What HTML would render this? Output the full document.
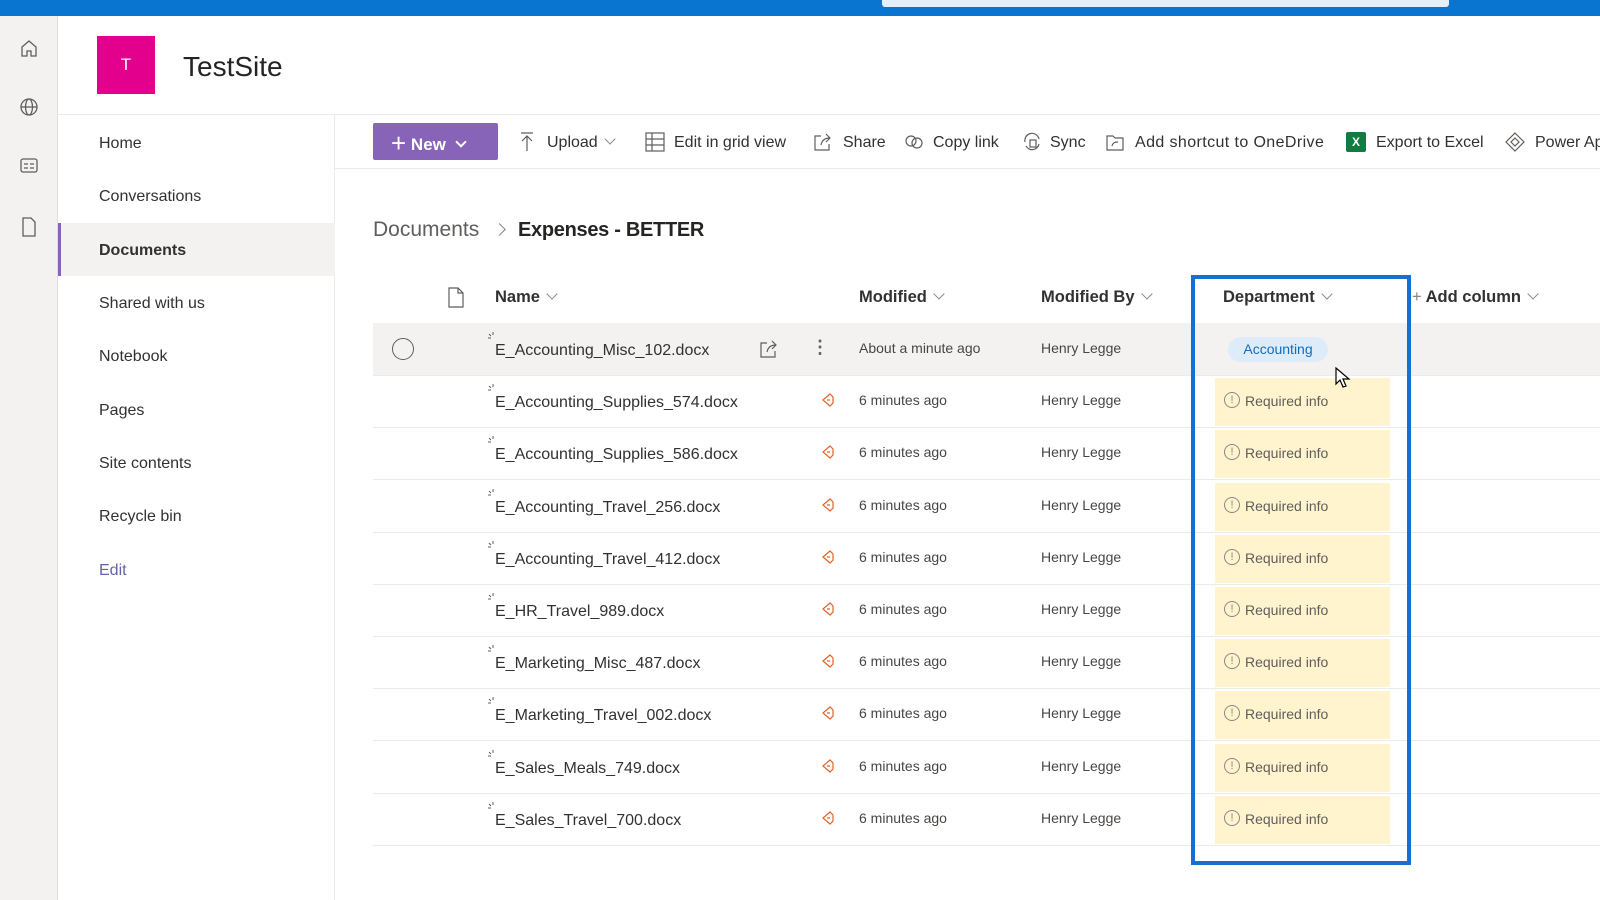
<!DOCTYPE html>
<html><head><meta charset="utf-8"><style>
*{box-sizing:border-box;margin:0;padding:0}
body{width:1600px;height:900px;overflow:hidden;background:#fff;font-family:"Liberation Sans",sans-serif;color:#323130;position:relative}
.a{position:absolute;white-space:nowrap}
.nav{font-size:16px;color:#323130}
.cmd{font-size:16px;color:#323130;top:134px}
.hdr{font-size:16.5px;color:#323130;top:288px;font-weight:600}
.fn{font-size:16px;color:#323130}
.mod{font-size:14px;color:#484644}
.req{position:absolute;left:1215px;width:175px;background:#fff4ce;color:#605e5c;font-size:14px}
.chev{display:inline-block;width:8px;height:8px;border-right:1.3px solid #8a8886;border-bottom:1.3px solid #8a8886;transform:rotate(45deg);margin-left:8px;position:relative;top:-4px}
</style></head><body>
<div class="a" style="left:0;top:0;width:1600px;height:16px;background:#0a74d1"></div>
<div class="a" style="left:882px;top:0;width:567px;height:7px;background:#e8eef5;border-radius:0 0 3px 3px"></div>
<div class="a" style="left:0;top:16px;width:58px;height:884px;background:#f3f2f1;border-right:1px solid #e1dfdd"></div>
<svg class="a" style="left:19px;top:38px" width="20" height="210" fill="none" stroke="#605e5c" stroke-width="1.3">
<path d="M3 9 L10 3 L17 9 V18 H12 V13 H8 V18 H3 Z"/>
<circle cx="10" cy="69" r="8"/><ellipse cx="10" cy="69" rx="3.5" ry="8"/><path d="M2 69H18"/>
<rect x="2" y="121" width="16" height="13" rx="2"/><path d="M5 126H9M5 130H9M11 126H15M11 130H15"/>
<path d="M4 180H12L16 184V198H4Z"/>
</svg>
<div class="a" style="left:58px;top:114px;width:1542px;height:1px;background:#edebe9"></div>
<div class="a" style="left:97px;top:36px;width:58px;height:58px;background:#e3008c;color:#fff;font-size:17px;text-align:center;line-height:58px">T</div>
<div class="a" style="left:183px;top:51px;font-size:28px;color:#252423">TestSite</div>
<div class="a" style="left:58px;top:115px;width:277px;height:785px;background:#fff;border-right:1px solid #edebe9"></div>
<div class="a" style="left:58px;top:223px;width:277px;height:53px;background:#f3f2f1;border-left:3px solid #8764b8"></div>
<div class="a nav" style="left:99px;top:135px">Home</div>
<div class="a nav" style="left:99px;top:188px">Conversations</div>
<div class="a nav" style="left:99px;top:242px;font-weight:600">Documents</div>
<div class="a nav" style="left:99px;top:295px">Shared with us</div>
<div class="a nav" style="left:99px;top:348px">Notebook</div>
<div class="a nav" style="left:99px;top:402px">Pages</div>
<div class="a nav" style="left:99px;top:455px">Site contents</div>
<div class="a nav" style="left:99px;top:508px">Recycle bin</div>
<div class="a nav" style="left:99px;top:562px;color:#6264a7">Edit</div>
<div class="a" style="left:335px;top:168px;width:1265px;height:1px;background:#edebe9"></div>
<div class="a" style="left:373px;top:123px;width:125px;height:37px;background:#8764b8;border-radius:2px;color:#fff;font-size:17px;font-weight:600;line-height:37px;padding-left:18px"><span style="font-size:26px;font-weight:400;position:relative;top:2px">+</span> New <span class="chev" style="border-color:#fff;border-width:2px;margin-left:6px"></span></div>
<svg class="a" style="left:519px;top:132px" width="16" height="20" fill="none" stroke="#605e5c" stroke-width="1.2"><path d="M2 1H14M8 4V19M3 9L8 4L13 9"/></svg>
<div class="a cmd" style="left:547px">Upload<span class="chev"></span></div>
<svg class="a" style="left:645px;top:132px" width="20" height="20" fill="none" stroke="#605e5c" stroke-width="1.2"><rect x="1" y="1" width="18" height="18"/><path d="M1 7H19M1 13H19M7 1V19"/></svg>
<div class="a cmd" style="left:674px">Edit in grid view</div>
<svg class="a" style="left:813px;top:132px" width="20" height="20" fill="none" stroke="#605e5c" stroke-width="1.2"><path d="M8 4H2V18H16V12M8 13C9 8 12 6 17 6M13 2L17 6L13 10"/></svg>
<div class="a cmd" style="left:843px">Share</div>
<svg class="a" style="left:904px;top:133px" width="20" height="18" fill="none" stroke="#605e5c" stroke-width="1.2"><circle cx="7" cy="8" r="5"/><circle cx="13" cy="10" r="5"/></svg>
<div class="a cmd" style="left:933px">Copy link</div>
<svg class="a" style="left:1022px;top:131px" width="20" height="22" fill="none" stroke="#605e5c" stroke-width="1.2"><path d="M3 11A7 7 0 0 1 17 8M17 13A7 7 0 0 1 4 15"/><rect x="8" y="9" width="6" height="7"/></svg>
<div class="a cmd" style="left:1050px">Sync</div>
<svg class="a" style="left:1105px;top:132px" width="20" height="20" fill="none" stroke="#605e5c" stroke-width="1.2"><path d="M2 4H8L10 6H18V18H2Z"/><path d="M7 14C8 10 11 10 13 10"/></svg>
<div class="a cmd" style="left:1135px;letter-spacing:0.4px">Add shortcut to OneDrive</div>
<div class="a" style="left:1346px;top:132px;width:20px;height:20px;background:#107c41;border-radius:2px;color:#fff;font-size:12px;font-weight:700;text-align:center;line-height:20px">X</div>
<div class="a cmd" style="left:1376px">Export to Excel</div>
<svg class="a" style="left:1505px;top:132px" width="20" height="20" fill="none" stroke="#605e5c" stroke-width="1.2"><path d="M10 1L19 10L10 19L1 10Z"/><path d="M10 6L14 10L10 14L6 10Z"/></svg>
<div class="a cmd" style="left:1535px">Power Apps</div>
<div class="a" style="left:373px;top:218px;font-size:21px;color:#605e5c">Documents</div>
<div class="a" style="left:495px;top:225px;width:9px;height:9px;border-right:1.3px solid #8a8886;border-top:1.3px solid #8a8886;transform:rotate(45deg)"></div>
<div class="a" style="left:518px;top:219px;font-size:20px;color:#252423;font-weight:600;letter-spacing:-0.3px">Expenses - BETTER</div>
<svg class="a" style="left:447px;top:287px" width="18" height="21" fill="none" stroke="#605e5c" stroke-width="1.2"><path d="M2 1H11L16 6V20H2Z M11 1V6H16"/></svg>
<div class="a hdr" style="left:495px">Name<span class="chev"></span></div>
<div class="a hdr" style="left:859px">Modified<span class="chev"></span></div>
<div class="a hdr" style="left:1041px">Modified By<span class="chev"></span></div>
<div class="a hdr" style="left:1223px">Department<span class="chev"></span></div>
<div class="a hdr" style="left:1412px"><span style="color:#8a8886;font-weight:400">+</span> Add column<span class="chev"></span></div>
<div class="a" style="left:373px;top:323px;width:1227px;height:52px;background:#f3f2f1"></div>
<div id="rows"></div>
<script>
var n=["E_Accounting_Misc_102.docx","E_Accounting_Supplies_574.docx","E_Accounting_Supplies_586.docx","E_Accounting_Travel_256.docx","E_Accounting_Travel_412.docx","E_HR_Travel_989.docx","E_Marketing_Misc_487.docx","E_Marketing_Travel_002.docx","E_Sales_Meals_749.docx","E_Sales_Travel_700.docx"];
var h="";
for(var i=0;i<10;i++){var c=349+i*52.2;var t=c-26;
h+='<div class="a" style="left:373px;top:'+(t+52)+'px;width:1227px;height:1px;background:#edebe9"></div>';
h+='<svg class="a" style="left:488px;top:'+(c-17)+'px" width="10" height="10" stroke="#605e5c" stroke-width="1"><path d="M5 0V3M1 2L3 4M0 6H3"/></svg>';
h+='<div class="a fn" style="left:495px;top:'+(c-7)+'px">'+n[i]+'</div>';
h+='<div class="a mod" style="left:859px;top:'+(c-9)+'px">'+(i?'6 minutes ago':'About a minute ago')+'</div>';
h+='<div class="a mod" style="left:1041px;top:'+(c-9)+'px">Henry Legge</div>';
if(i==0){
h+='<div class="a" style="left:392px;top:'+(c-11)+'px;width:22px;height:22px;border:1.3px solid #605e5c;border-radius:50%"></div>';
h+='<svg class="a" style="left:759px;top:'+(c-10)+'px" width="20" height="20" fill="none" stroke="#605e5c" stroke-width="1.2"><path d="M8 4H2V18H16V12M8 13C9 8 12 6 17 6M13 2L17 6L13 10"/></svg>';
h+='<div class="a" style="left:811px;top:'+(c-12)+'px;font-size:18px;color:#605e5c;font-weight:700">⋮</div>';
h+='<div class="a" style="left:1228px;top:'+(c-12)+'px;width:100px;height:25px;background:#deecf9;border-radius:13px;color:#0f6cbd;font-size:14px;text-align:center;line-height:25px">Accounting</div>';
}else{
h+='<svg class="a" style="left:820px;top:'+(c-9)+'px" width="16" height="16" fill="none" stroke="#e0632a" stroke-width="1.2"><path d="M10 2L3 8L10 14L13 11V5Z M7 8H10" /></svg>';
h+='<div class="req" style="top:'+(t+3)+'px;height:48px"><span style="position:absolute;left:9px;top:14px;width:16px;height:16px;border:1.2px solid #8a8886;border-radius:50%;font-size:11px;text-align:center;line-height:14px;color:#8a8886">!</span><span style="position:absolute;left:30px;top:15px">Required info</span></div>';
}}
document.getElementById('rows').innerHTML=h;
</script>
<div class="a" style="left:1191px;top:275px;width:220px;height:590px;border:4px solid #1670d4"></div>
<svg class="a" style="left:1335px;top:367px" width="16" height="22"><path d="M1 1V17L5 13L8 20L11 19L8 12H14Z" fill="#fff" stroke="#000" stroke-width="1.2"/></svg>
</body></html>
